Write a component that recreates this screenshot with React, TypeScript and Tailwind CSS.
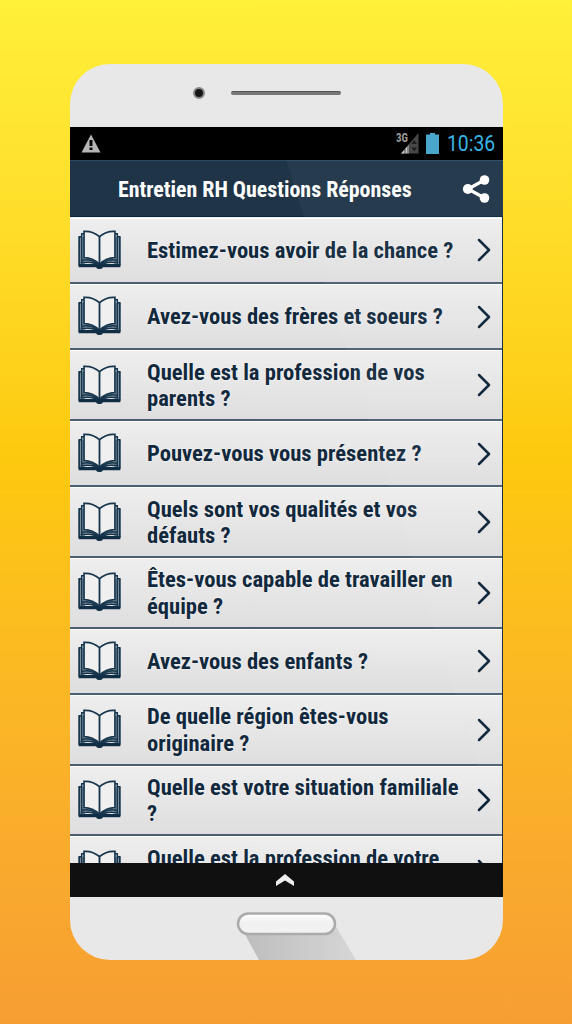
import clsx from "clsx";

type Question = {
  text: string;
  lines: 1 | 2;
};

const questions: Question[] = [
  { text: "Estimez-vous avoir de la chance ?", lines: 1 },
  { text: "Avez-vous des frères et soeurs ?", lines: 1 },
  { text: "Quelle est la profession de vos\nparents ?", lines: 2 },
  { text: "Pouvez-vous vous présentez ?", lines: 1 },
  { text: "Quels sont vos qualités et vos\ndéfauts ?", lines: 2 },
  { text: "Êtes-vous capable de travailler en\néquipe ?", lines: 2 },
  { text: "Avez-vous des enfants ?", lines: 1 },
  { text: "De quelle région êtes-vous\noriginaire ?", lines: 2 },
  { text: "Quelle est votre situation familiale\n?", lines: 2 },
  { text: "Quelle est la profession de votre\n ", lines: 2 },
];

const BookIcon = () => (
  <svg viewBox="0 0 128 116" className="h-[39px] w-[43px] shrink-0 -translate-y-px" fill="none" stroke="#17364d">
    <path d="M2 20H20V104H2ZM108 20H126V104H108Z" fill="#8496a3" stroke="none" />
    <path d="M3.500 19V104H124.500V19" strokeWidth="5" />
    <path d="M2 20H10M126 20H118" strokeWidth="4" />
    <path d="M11 11V99M117 11V99M9 11H18M119 11H110" strokeWidth="4.500" />
    <path d="M18 4C36 3 52 9 64 20C76 9 92 3 110 4V82C92 82 76 90 64 102C52 90 36 82 18 82Z" fill="#f0f0f0" strokeWidth="5" />
    <path d="M64 20V102" strokeWidth="5.500" />
    <path d="M12 90C32 86 50 92 64 105C78 92 96 86 116 90" strokeWidth="5" />
    <path d="M8 98C30 93 50 96 64 107C78 96 98 93 120 98" strokeWidth="5" />
    <path d="M2 102H126V111H74C72 118 56 118 54 111H2Z" fill="#102f47" stroke="none" />
  </svg>
);

const Chevron = () => (
  <svg viewBox="0 0 14 24" className="h-6 w-3.5 shrink-0" fill="none" stroke="#0b2238" strokeWidth="2.5" strokeLinecap="round" strokeLinejoin="round">
    <path d="M2 2L12 12L2 22" />
  </svg>
);

const QuestionRow = ({ question }: { question: Question }) => (
  <div
    className={clsx(
      "flex shrink-0 items-center border-t border-b-2 border-t-white border-b-[#4b5f71] bg-linear-to-b from-[#eeeeee] to-[#dedede] pr-[11px] pl-2",
      question.lines === 1 ? "h-[66.4px]" : "h-[70.6px]",
    )}
  >
    <BookIcon />
    <p className="ml-[26px] flex-1 pt-0.5 text-[22.6px] leading-[26.4px] font-bold whitespace-pre text-[#12293d] [text-shadow:0_0_2px_#fff]">
      {question.text}
    </p>
    <Chevron />
  </div>
);

const StatusBar = () => (
  <div className="flex h-[33px] shrink-0 items-center bg-black pr-2 pl-[11px]">
    <svg viewBox="0 0 20 19" className="h-[19px] w-5">
      <path d="M10 0.500L19.500 18.500H0.500Z" fill="#b5b5b5" />
      <path d="M8.500 6H11.500V12H8.500ZM8.500 13.500H11.500V16H8.500Z" fill="#0a0a0a" />
    </svg>
    <svg viewBox="0 0 24 22" className="ml-auto h-[22px] w-6 -translate-y-px">
      <text x="1" y="9.500" fontSize="12.500" fontWeight="700" fill="#9a9a9a" textLength="12" lengthAdjust="spacingAndGlyphs">3G</text>
      <path d="M23.500 1V21.500H6Z" fill="#474747" />
      <path d="M6 21.500L14 12.500V21.500Z" fill="#c9c9c9" />
      <path d="M10 17V22M13 13V22" stroke="#222" strokeWidth="0.800" />
      <path d="M16.500 12H22L19.300 8ZM16.500 15.500H22L19.300 19.500Z" fill="#1d1d1d" />
    </svg>
    <svg viewBox="0 0 13 21" className="ml-[7px] h-[21px] w-[13px]">
      <path d="M4 0H9V1.500H13V21H0V1.500H4Z" fill="#4ba6cc" />
    </svg>
    <span className="ml-2 w-12 pt-px text-[21.5px] leading-none font-normal whitespace-nowrap text-[#38b5e6] [font-family:Roboto,sans-serif]">
      <span className="inline-block origin-left scale-x-[0.9]">10:36</span>
    </span>
  </div>
);

const Header = () => (
  <header className="flex h-[57px] shrink-0 items-center border-t border-b border-t-[#294b64] border-b-[#0c263b] bg-[#1f3447] pr-[13px] pl-12 text-white">
    <h1 className="flex-1 pt-0.5 text-[21.9px] leading-none font-bold whitespace-nowrap">Entretien RH Questions Réponses</h1>
    <svg viewBox="0 0 28 28" className="h-7 w-7 shrink-0" fill="white" stroke="white">
      <path d="M22.500 5L6 14L22.500 23" fill="none" strokeWidth="3.200" />
      <circle cx="22.500" cy="5" r="4.800" stroke="none" />
      <circle cx="5.800" cy="14" r="4.900" stroke="none" />
      <circle cx="22.500" cy="23" r="4.800" stroke="none" />
    </svg>
  </header>
);

const App = () => {
  return (
    <main className="flex h-[1024px] w-[572px] bg-linear-to-b from-[#fff03a] via-[#fdc90d] via-45% to-[#f79e33] pt-16 pl-[70px] [font-family:'Roboto_Condensed',Roboto,sans-serif]">
      <div className="flex h-[896px] w-[433px] flex-col overflow-hidden rounded-[40px] bg-[#e8e8e8]">
        <div className="flex h-[63px] shrink-0 items-start pt-[22.500px] pl-[122.500px]">
          <span className="h-3 w-3 rounded-full border-2 border-[#8a8a8a] bg-[#161616]" />
          <span className="mt-[4px] ml-[26.500px] h-[4.500px] w-[110px] rounded-full border-t border-[#555] bg-[#777]" />
        </div>

        <div className="relative flex h-[736px] shrink-0 flex-col overflow-hidden">
          <StatusBar />
          <Header />
          <div className="flex min-h-0 flex-1 flex-col overflow-hidden border-r border-[#16293a] bg-[#eeeeee] pt-[0.6px]">
            {questions.map((question) => (
              <QuestionRow key={question.text} question={question} />
            ))}
          </div>
          {/* glass reflection */}
          <div className="pointer-events-none absolute inset-x-0 top-[33px] bottom-0 bg-white/4 [clip-path:polygon(216px_0,100%_0,100%_100%,438px_100%)]" />
        </div>

        <div className="flex h-[34px] shrink-0 items-center justify-center bg-[#101010]">
          <svg viewBox="0 0 20 14" className="h-3.5 w-5 -translate-x-[2px]">
            <path d="M10 1L19 8.500V13L10 7.500L1 13V8.500Z" fill="#eeeeee" />
          </svg>
        </div>

        <svg viewBox="0 0 433 63" className="h-[63px] w-[433px] shrink-0">
          <defs>
            <linearGradient id="shade" x1="0" y1="0" x2="1" y2="0">
              <stop offset="0" stopColor="#bdbdbd" />
              <stop offset="1" stopColor="#d6d6d6" />
            </linearGradient>
            <linearGradient id="key" x1="0" y1="0" x2="0" y2="1">
              <stop offset="0" stopColor="#ffffff" />
              <stop offset="0.5" stopColor="#f0f0f0" />
              <stop offset="1" stopColor="#f3f3f3" />
            </linearGradient>
          </defs>
          <path d="M172 32L189 63H286L265 28Z" fill="url(#shade)" />
          <rect x="168" y="16.500" width="97" height="20.500" rx="10.250" fill="url(#key)" stroke="#ababab" strokeWidth="2.500" />
        </svg>
      </div>
    </main>
  );
};

export default App;
